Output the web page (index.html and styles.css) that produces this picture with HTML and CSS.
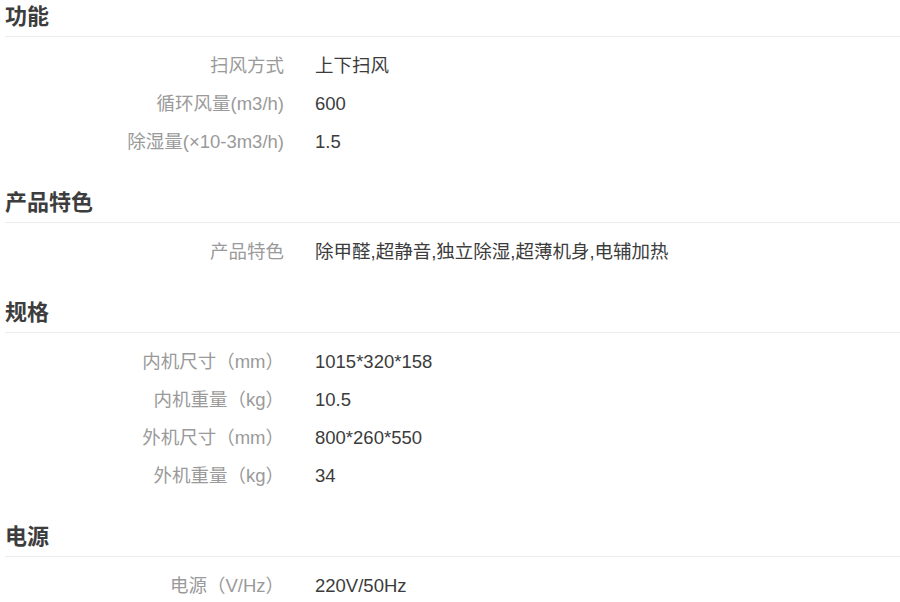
FILE: index.html
```html
<!DOCTYPE html>
<html lang="zh-CN">
<head>
<meta charset="utf-8">
<title>参数</title>
<link rel="stylesheet" href="styles.css">
</head>
<body>
<div class="spec">
  <section class="group">
    <h2 class="group-title">功能</h2>
    <dl class="rows">
      <div class="row"><dt>扫风方式</dt><dd>上下扫风</dd></div>
      <div class="row"><dt>循环风量(m3/h)</dt><dd>600</dd></div>
      <div class="row"><dt>除湿量(×10-3m3/h)</dt><dd>1.5</dd></div>
    </dl>
  </section>
  <section class="group">
    <h2 class="group-title">产品特色</h2>
    <dl class="rows">
      <div class="row"><dt>产品特色</dt><dd>除甲醛,超静音,独立除湿,超薄机身,电辅加热</dd></div>
    </dl>
  </section>
  <section class="group">
    <h2 class="group-title">规格</h2>
    <dl class="rows">
      <div class="row"><dt>内机尺寸（mm）</dt><dd>1015*320*158</dd></div>
      <div class="row"><dt>内机重量（kg）</dt><dd>10.5</dd></div>
      <div class="row"><dt>外机尺寸（mm）</dt><dd>800*260*550</dd></div>
      <div class="row"><dt>外机重量（kg）</dt><dd>34</dd></div>
    </dl>
  </section>
  <section class="group">
    <h2 class="group-title">电源</h2>
    <dl class="rows">
      <div class="row"><dt>电源（V/Hz）</dt><dd>220V/50Hz</dd></div>
    </dl>
  </section>
</div>
</body>
</html>
```

FILE: styles.css
```css
html, body {
  margin: 0;
  padding: 0;
  background: #fff;
}
body {
  font-family: "Liberation Sans", "Noto Sans CJK SC", sans-serif;
  color: #333;
  overflow: hidden;
}
.spec {
  padding-left: 5px;
}
.group {
  padding-bottom: 25px;
}
.group-title {
  margin: 0;
  padding: 0 0 2px 0;
  font-size: 22px;
  line-height: 34px;
  font-weight: bold;
  color: #3d3d3d;
  border-bottom: 1px solid #ececec;
}
.rows {
  margin: 10px 0 0 0;
  padding: 0;
}
.row {
  display: grid;
  grid-template-columns: 279px 1fr;
  column-gap: 31px;
  height: 38px;
  line-height: 38px;
  font-size: 18.5px;
}
.row dt {
  text-align: right;
  color: #9a9a9a;
  white-space: nowrap;
}
.row dd {
  margin: 0;
  color: #3c3c3c;
  white-space: nowrap;
}
```
